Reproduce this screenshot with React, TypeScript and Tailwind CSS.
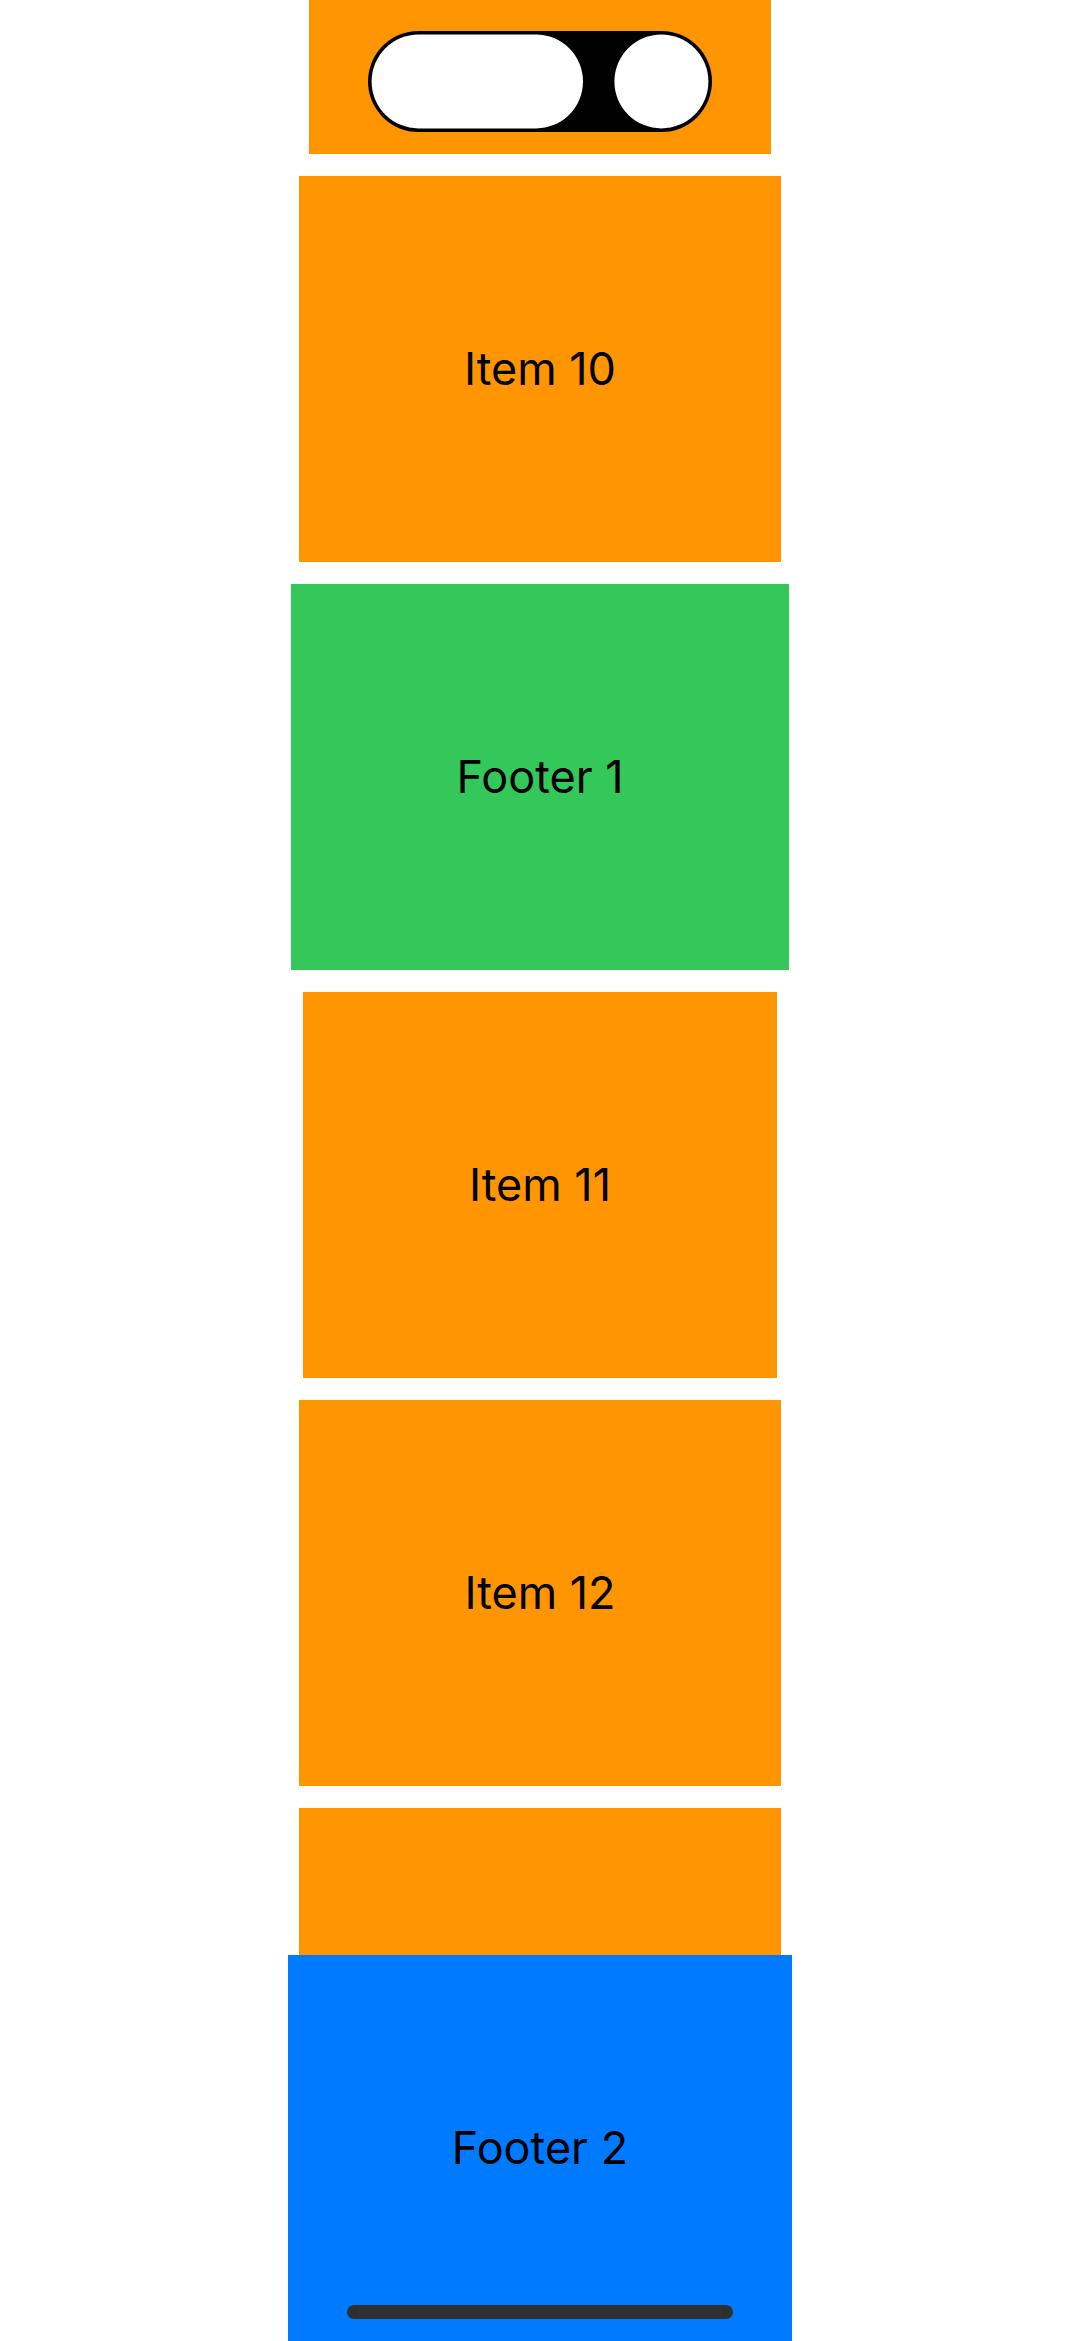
const cards = [
  { id: 'item-9', label: '', box: 'h-[154px] w-[462px] bg-[#ff9500]' },
  { id: 'item-10', label: 'Item 10', box: 'h-[386px] w-[482px] bg-[#ff9500]' },
  { id: 'footer-1', label: 'Footer 1', box: 'h-[386px] w-[498px] bg-[#34c759]' },
  { id: 'item-11', label: 'Item 11', box: 'h-[386px] w-[474px] bg-[#ff9500]' },
  { id: 'item-12', label: 'Item 12', box: 'h-[386px] w-[482px] bg-[#ff9500]' },
  { id: 'item-13', label: '', box: 'h-[386px] w-[482px] bg-[#ff9500]' },
];

function DynamicIsland() {
  return (
    <svg
      className="absolute top-[31px] left-1/2 h-[101px] w-[344px] -translate-x-1/2"
      viewBox="0 0 344 101"
      aria-hidden="true"
    >
      <rect width="344" height="101" rx="50.5" fill="#000" />
      <rect x="3.6" y="3.4" width="211.4" height="94" rx="47" fill="#fff" />
      <circle cx="293.4" cy="50.4" r="47" fill="#fff" />
    </svg>
  );
}

export default function App() {
  return (
    <div className="relative flex h-screen flex-col items-center bg-white font-['Inter',sans-serif] text-[45px] leading-[56px] text-black">
      <main className="flex min-h-0 w-full flex-1 flex-col items-center gap-[22px] overflow-hidden">
        {cards.map((card) => (
          <section key={card.id} className={`flex shrink-0 items-center justify-center ${card.box}`}>
            {card.label && <p>{card.label}</p>}
          </section>
        ))}
      </main>
      <footer className="flex h-[386px] w-[504px] shrink-0 items-center justify-center bg-[#007aff]">
        <p>Footer 2</p>
      </footer>
      <DynamicIsland />
      <div className="absolute bottom-[22px] left-1/2 h-[14px] w-[386px] -translate-x-1/2 rounded-full bg-[#2f2f2f]" />
    </div>
  );
}
